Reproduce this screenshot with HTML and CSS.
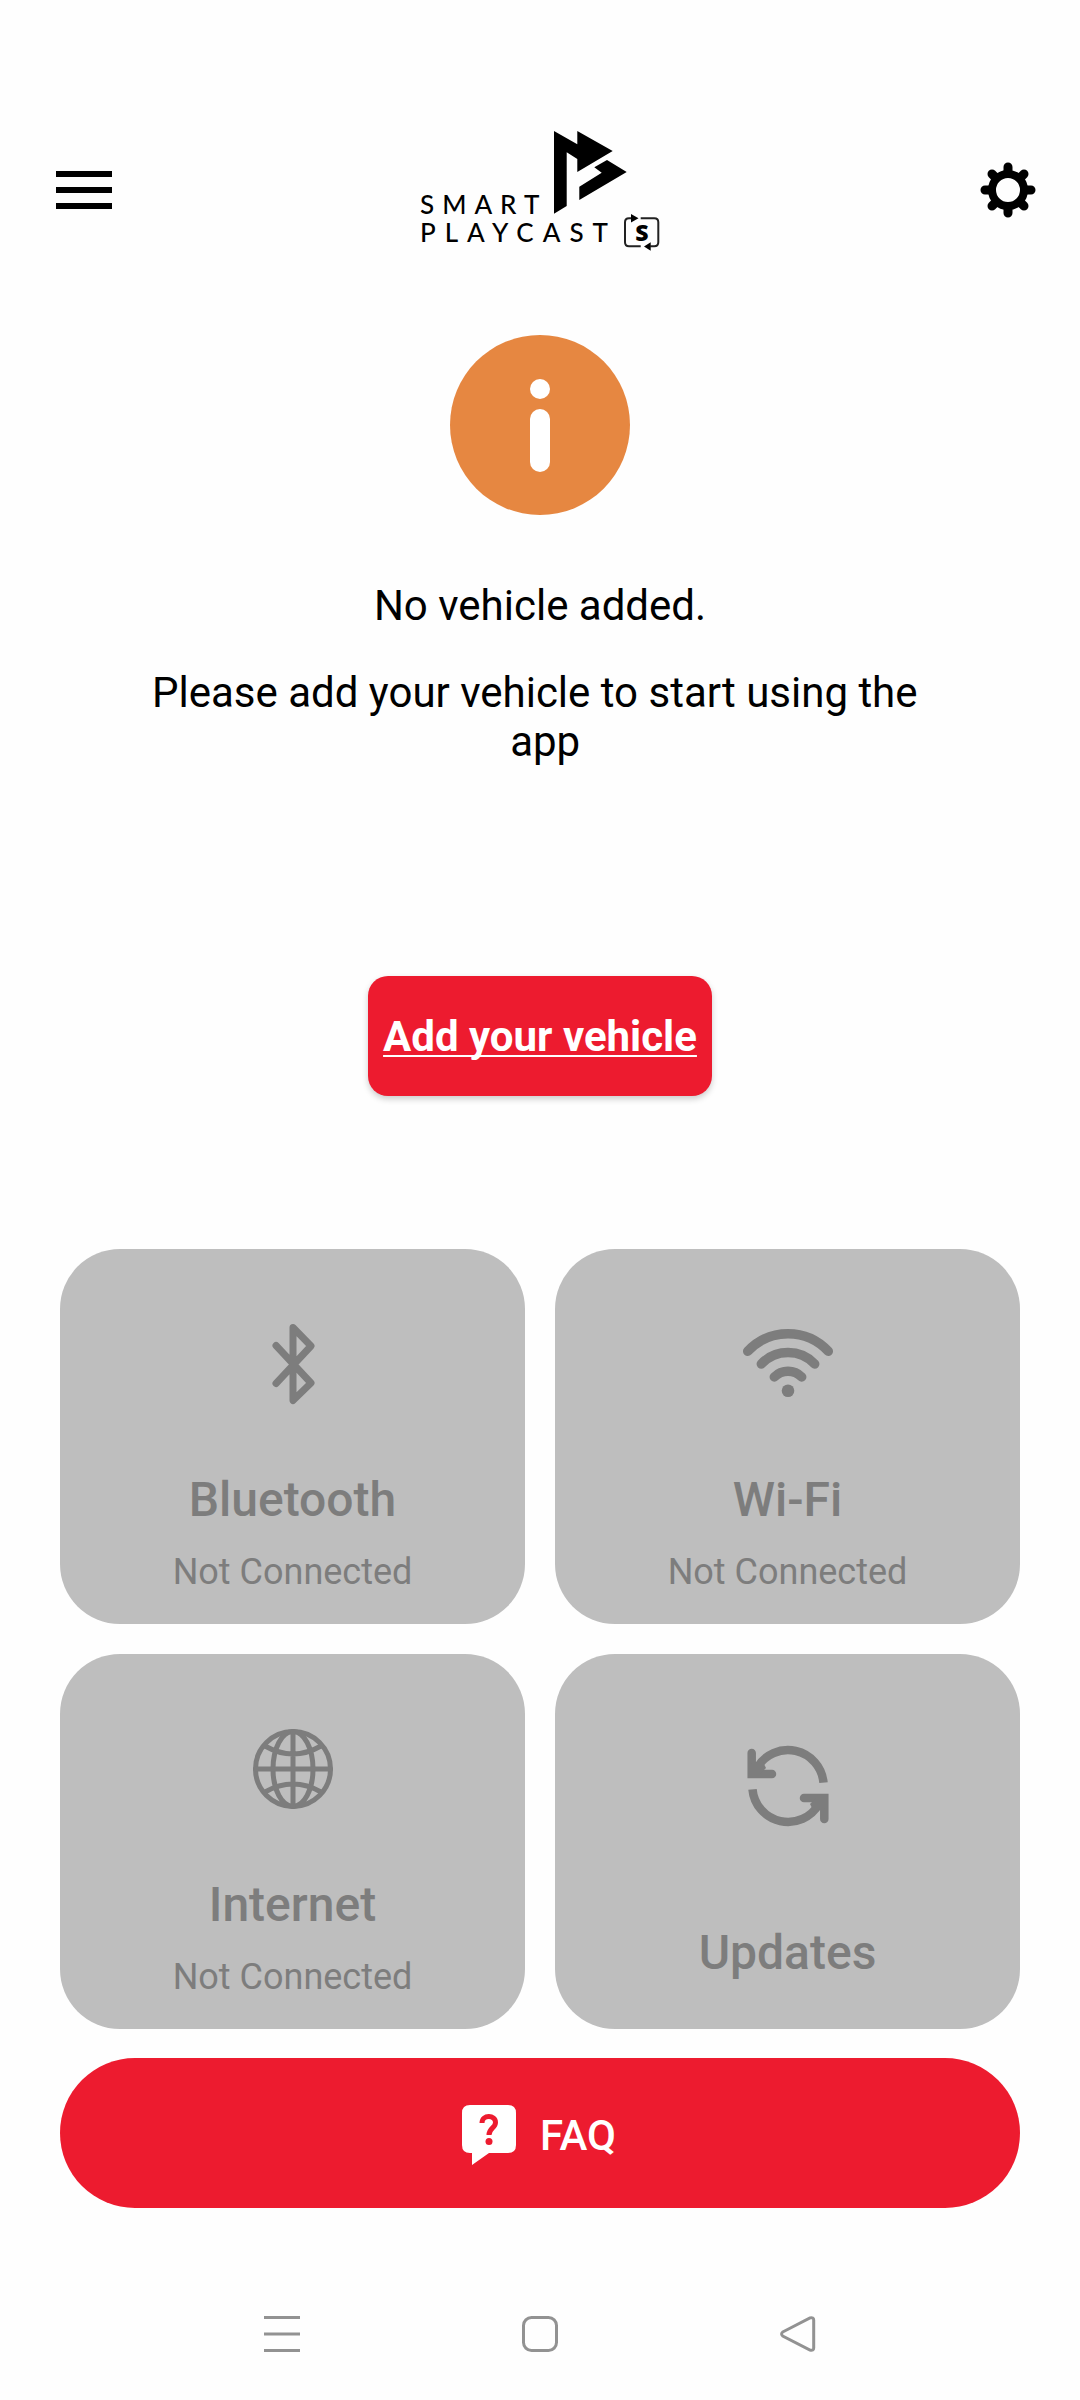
FILE: index.html
```html
<!DOCTYPE html>
<html lang="en">
<head>
<meta charset="utf-8">
<meta name="viewport" content="width=device-width, initial-scale=1">
<title>Smart Playcast</title>
<link rel="stylesheet" href="styles.css">
</head>
<body>
<div class="app">
  <header class="topbar">
    <button class="icon-button" type="button" aria-label="Menu">
      <svg width="56" height="38" viewBox="0 0 56 38"><path d="M0 0h56v6H0zM0 16h56v6H0zM0 32h56v6H0z"/></svg>
    </button>
    <svg class="logo" width="240" height="120" viewBox="0 0 240 120" role="img" aria-label="Smart Playcast S">
      <path d="M134 1 157.300 14.300V1L192.700 21 157.300 42V29L146.700 22.300V76L134 83.700Z"/>
      <path d="M187 30 206.700 42 159.300 70V56.700L181.700 42.700 174.300 37.300Z"/>
      <text class="logo-word logo-word-top" x="0" y="84">SMART</text>
      <text class="logo-word" x="0" y="112">PLAYCAST</text>
      <path class="logo-frame" d="M211 88.300h-2q-4 0-4 4v20q0 4 4 4h11.700M220.700 88.300h13.600q4 0 4 4v20q0 4-4 4h-4"/>
      <path d="M211 84v8.500L218.500 88.300ZM230.700 112.300v8.500L224 116.500Z"/>
      <text class="logo-mark" x="222" y="111">S</text>
    </svg>
    <button class="icon-button icon-button-end" type="button" aria-label="Settings">
      <svg width="56" height="56" viewBox="0 0 56 56">
        <circle class="gear-ring" cx="28" cy="28" r="16"/>
        <path class="gear-teeth" d="M28 11V5M28 45v6M11 28H5M45 28h6M16 16l-4-4M40 16l4-4M16 40l-4 4M40 40l4 4"/>
      </svg>
    </button>
  </header>

  <main class="content">
    <section class="notice">
      <svg class="notice-icon" width="180" height="180" viewBox="0 0 180 180" aria-hidden="true">
        <circle cx="90" cy="90" r="90" fill="#e68741"/>
        <circle cx="90" cy="54" r="10" fill="#fff"/>
        <rect x="80" y="74" width="20" height="63" rx="10" fill="#fff"/>
      </svg>
      <p class="notice-text">No vehicle added.</p>
      <p class="notice-text">Please add your vehicle to start using the&nbsp;<br>&nbsp;app</p>
    </section>

    <button class="add-button" type="button">Add your vehicle</button>

    <section class="tiles">
      <button class="tile" type="button" disabled>
        <svg class="tile-icon" viewBox="0 0 100 100" aria-hidden="true"><path stroke-width="7" d="M33 31.500 68 69 50 86.500V13.500L68 32 33 69.500"/></svg>
        <span class="tile-title">Bluetooth</span>
        <span class="tile-status">Not Connected</span>
      </button>
      <button class="tile" type="button" disabled>
        <svg class="tile-icon" viewBox="0 0 100 100" aria-hidden="true"><path stroke-width="9.500" d="M9.700 37.300A55 55 0 0 1 90.300 37.300M23.300 50A37 37 0 0 1 76.700 50M36.300 63A19.300 19.300 0 0 1 63.700 63"/><circle class="solid" cx="50" cy="76.700" r="6.300"/></svg>
        <span class="tile-title">Wi-Fi</span>
        <span class="tile-status">Not Connected</span>
      </button>
      <button class="tile" type="button" disabled>
        <svg class="tile-icon" viewBox="0 0 100 100" aria-hidden="true"><g stroke-width="5"><circle cx="50" cy="50" r="37.500"/><ellipse cx="50" cy="50" rx="20" ry="37.500"/><path d="M50 12.500v75M12.500 50h75M22 27Q50 43 78 27M22 73Q50 57 78 73"/></g></svg>
        <span class="tile-title">Internet</span>
        <span class="tile-status">Not Connected</span>
      </button>
      <button class="tile tile-plain" type="button" disabled>
        <svg class="tile-icon" viewBox="0 0 100 100" aria-hidden="true"><g class="sync" stroke-width="8.500"><path class="flat" d="M85.500 46.700A35.700 35.700 0 0 0 19 32L14 38"/><path d="M13.700 17V38H34"/><path class="solid" d="M13 38V28L24 24 28 32 22 38Z"/><path class="flat" d="M14.500 53.300A35.700 35.700 0 0 0 81 68L86 62"/><path d="M86.300 83V62H66"/><path class="solid" d="M87 62V72L76 76 72 68 78 62Z"/></g></svg>
        <span class="tile-title">Updates</span>
      </button>
    </section>

    <button class="faq-button" type="button">
      <svg width="54" height="60" viewBox="0 0 54 60" aria-hidden="true">
        <path fill="#fff" d="M8 0H46Q54 0 54 8V40Q54 48 46 48H27L10 60V48H8Q0 48 0 40V8Q0 0 8 0Z"/>
        <path class="question" d="M20 18C20 9.500 33.500 9.500 33.500 17.500C33.500 23 27 23 27 30"/>
        <circle cx="27" cy="36.500" r="3.500" fill="#ed1b2f"/>
      </svg>
      <span>FAQ</span>
    </button>
  </main>

  <nav class="system-nav" aria-label="System">
    <button class="nav-button" type="button" aria-label="Recent apps">
      <svg width="36" height="36" viewBox="0 0 36 36"><path d="M0 1.500h36M0 18h36M0 34.500h36"/></svg>
    </button>
    <button class="nav-button" type="button" aria-label="Home">
      <svg width="36" height="36" viewBox="0 0 36 36"><rect x="1.500" y="1.500" width="33" height="33" rx="8"/></svg>
    </button>
    <button class="nav-button" type="button" aria-label="Back">
      <svg width="36" height="36" viewBox="0 0 36 36"><path d="M2.700 16 30 1.900Q33.700 1 33.700 4V32Q33.700 35 30 34.100L2.700 20Q.5 18 2.700 16Z"/></svg>
    </button>
  </nav>
</div>
</body>
</html>
```

FILE: styles.css
```css
* {
  box-sizing: border-box;
}

body {
  margin: 0;
  background: #fefefe;
  color: #000;
  font-family: Roboto, "Liberation Sans", sans-serif;
  font-size: 42px;
  line-height: 49px;
}

button {
  margin: 0;
  padding: 0;
  border: 0;
  background: none;
  color: inherit;
  font: inherit;
}

svg {
  display: block;
}

.app {
  display: flex;
  flex-direction: column;
  min-height: 100vh;
}

.topbar {
  display: grid;
  grid-template-columns: 1fr auto 1fr;
  align-items: center;
  padding: 130px 44px 0 56px;
}

.topbar .icon-button {
  justify-self: start;
}

.topbar .icon-button-end {
  justify-self: end;
}

.logo {
  margin-right: 12px;
  overflow: visible;
}

.logo-word {
  font-family: Lato, sans-serif;
  font-size: 26px;
  font-weight: 500;
  letter-spacing: 9px;
}

.logo-word-top {
  letter-spacing: 8px;
}

.logo-mark {
  font-family: "Open Sans", sans-serif;
  font-size: 23px;
  font-weight: 800;
  text-anchor: middle;
}

.logo-frame {
  fill: none;
  stroke: #222;
  stroke-width: 2;
}

.gear-ring {
  fill: none;
  stroke: #000;
  stroke-width: 8;
}

.gear-teeth {
  stroke: #000;
  stroke-width: 9;
  stroke-linecap: round;
}

.content {
  display: flex;
  flex-direction: column;
  align-items: center;
  padding: 85px 60px 0;
}

.notice {
  display: flex;
  flex-direction: column;
  align-items: center;
  text-align: center;
}

.notice-icon {
  margin-bottom: 28px;
}

.notice-text {
  margin: 38px 0 0;
}

.add-button {
  margin-top: 210px;
  padding: 36px 15px 35px;
  border-radius: 20px;
  background: #ed1b2f;
  box-shadow: 0 3px 6px rgba(0, 0, 0, 0.2);
  color: #fff;
  font-weight: 700;
  text-decoration: underline;
  text-decoration-thickness: 2px;
  text-underline-offset: 4px;
  text-decoration-skip-ink: none;
}

.tiles {
  display: grid;
  grid-template-columns: 1fr 1fr;
  gap: 30px;
  width: 100%;
  margin-top: 153px;
}

.tile {
  display: flex;
  flex-direction: column;
  align-items: center;
  padding: 65px 20px 31px;
  border-radius: 60px;
  background: #bebebe;
  color: #7d7d7d;
}

.tile-plain {
  padding-top: 82px;
}

.tile-icon {
  width: 100px;
  height: 100px;
  fill: none;
  stroke: #7d7d7d;
  stroke-linecap: round;
  stroke-linejoin: round;
}

.tile-icon .solid {
  fill: #7d7d7d;
  stroke: none;
}

.sync {
  stroke-linejoin: miter;
}

.sync .flat {
  stroke-linecap: butt;
}

.tile-title {
  margin-top: 58px;
  font-size: 48px;
  font-weight: 500;
  line-height: 56px;
}

.tile-plain .tile-title {
  margin-top: 89px;
}

.tile-status {
  margin-top: 23px;
  font-size: 36px;
  line-height: 42px;
}

.faq-button {
  display: flex;
  justify-content: center;
  align-items: center;
  gap: 24px;
  width: 100%;
  margin-top: 29px;
  padding: 47px 22px 43px 20px;
  border-radius: 75px;
  background: #ed1b2f;
  color: #fff;
  font-weight: 500;
}

.question {
  fill: none;
  stroke: #ed1b2f;
  stroke-width: 5;
}

.system-nav {
  display: grid;
  grid-template-columns: repeat(3, 1fr);
  margin-top: auto;
  padding: 48px 153px;
}

.nav-button {
  justify-self: center;
}

.nav-button svg {
  fill: none;
  stroke: #929292;
  stroke-width: 3;
}
```
